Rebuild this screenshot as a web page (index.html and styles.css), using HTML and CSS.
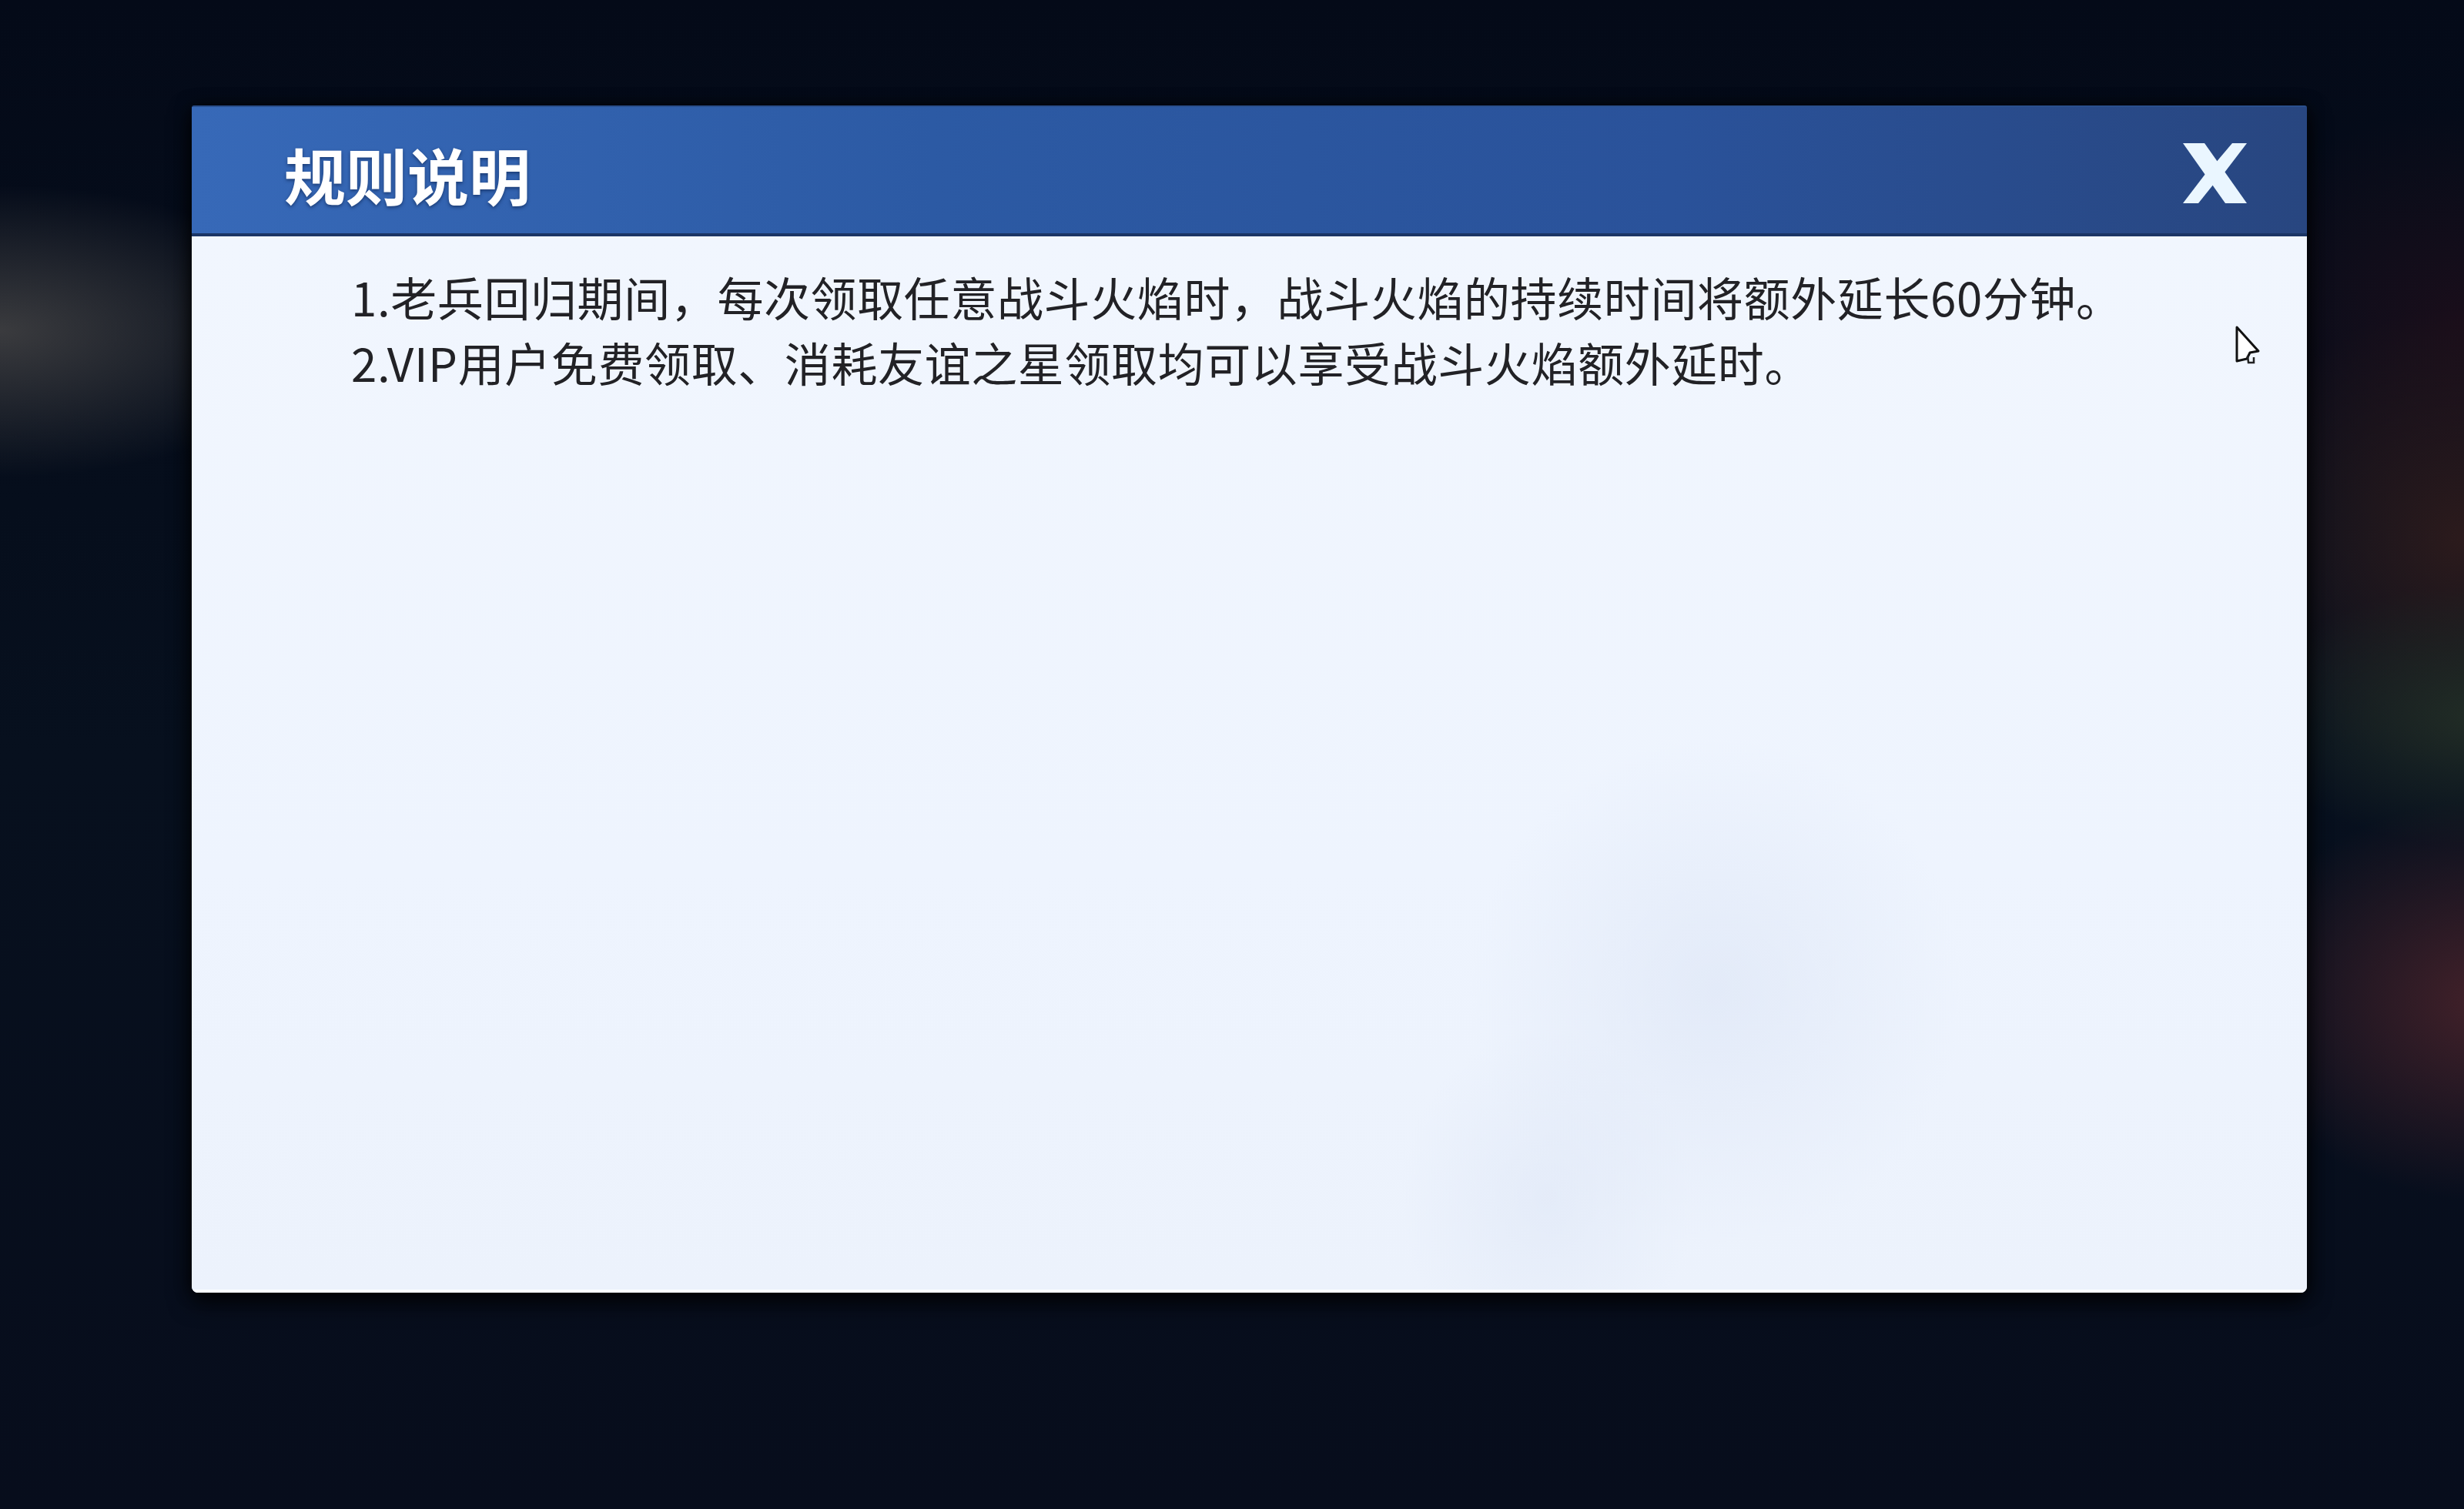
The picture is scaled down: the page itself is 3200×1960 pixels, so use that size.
FILE: index.html
```html
<!DOCTYPE html>
<html>
<head>
    <meta charset="utf-8">
    <link rel="stylesheet" href="styles.css">
</head>
<body>
    <div class="screen">
        <div class="dialog">
            <div class="dialog_head">
                <h1 class="dialog_title">规则说明</h1>
                <button class="btn_close">
                    <svg viewBox="0 0 84 78" width="84" height="78">
                        <polygon points="1,0 29,0 84,78 56,78" fill="#eaf6ff"/>
                        <polygon points="65,0 84,0 55,38 43,26" fill="#eaf6ff"/>
                        <polygon points="30,40 41,53 21,78 1,78" fill="#eaf6ff"/>
                    </svg>
                </button>
            </div>
            <div class="dialog_body">
                <p class="rule">1.老兵回归期间，每次领取任意战斗火焰时，战斗火焰的持续时间将额外延长60分钟。</p>
                <p class="rule">2.VIP用户免费领取、消耗友谊之星领取均可以享受战斗火焰额外延时。</p>
                <svg class="cursor" viewBox="0 0 40 54" width="40" height="54">
                    <polygon points="4,3 32,34 21,36 17,44 4,47" fill="#fff" stroke="#111" stroke-width="3" stroke-linejoin="round"/>
                    <path d="M18,40 L19,49 L26,49 L26,42" fill="none" stroke="#222" stroke-width="2.5"/>
                </svg>
            </div>
        </div>
    </div>
</body>
</html>
```

FILE: styles.css
```css
html, body { margin: 0; height: 100%; }
body {
    font-family: "Noto Sans CJK SC", "Noto Sans", sans-serif;
    background-color: #060c1a;
    background-image:
        radial-gradient(ellipse 420px 190px at 0px 430px, rgba(64, 64, 66, 0.9), rgba(64, 64, 66, 0)),
        radial-gradient(ellipse 330px 260px at 3230px 1300px, rgba(70, 34, 42, 0.95), rgba(70, 34, 42, 0)),
        radial-gradient(ellipse 300px 170px at 3220px 930px, rgba(34, 46, 38, 0.95), rgba(34, 46, 38, 0)),
        radial-gradient(ellipse 340px 300px at 3200px 700px, rgba(48, 28, 28, 0.9), rgba(48, 28, 28, 0)),
        radial-gradient(ellipse 330px 280px at 3200px 420px, rgba(28, 14, 26, 0.9), rgba(28, 14, 26, 0)),
        linear-gradient(180deg, #040a18 0%, #07101e 50%, #070d1c 100%);
}
.screen { width: 3200px; height: 1960px; padding: 137px 0 0 249px; box-sizing: border-box; }
.dialog {
    width: 2747px; height: 1542px;
    display: flex; flex-direction: column;
    border-radius: 3px 3px 8px 8px;
    overflow: hidden;
    box-shadow: 0 12px 30px rgba(0, 0, 0, 0.85), 0 0 20px rgba(0, 0, 0, 0.6);
}
.dialog_head {
    height: 170px; box-sizing: border-box;
    display: flex; align-items: center; justify-content: space-between;
    padding: 8px 78px 0 120px;
    background: linear-gradient(90deg, #3769b8 0%, #2c5aa4 35%, #2a529a 70%, #284680 100%);
    border-top: 2px solid #2a4f8c;
    border-bottom: 4px solid #1b3565;
}
.dialog_title {
    margin: 0; color: #fff;
    font-size: 80px; font-weight: 700; line-height: 1;
    text-shadow: 0 2px 4px rgba(10, 30, 70, 0.6);
}
.btn_close { background: none; border: none; padding: 0; cursor: pointer; display: block; }
.btn_close svg { display: block; }
.dialog_body {
    flex: 1; position: relative;
    padding: 35px 0 0 207px;
    background-color: #eff5fe;
    background-image:
        radial-gradient(ellipse 320px 330px at 1980px 980px, rgba(218, 227, 244, 0.55), rgba(218, 227, 244, 0)),
        radial-gradient(ellipse 190px 220px at 1760px 1250px, rgba(218, 227, 244, 0.45), rgba(218, 227, 244, 0)),
        linear-gradient(180deg, #f1f6fe 0%, #eef4fe 60%, #ecf2fc 100%);
    border-bottom: 4px solid #fbfdff;
}
.rule {
    margin: 0; color: #222226;
    font-size: 60px; line-height: 85px; white-space: nowrap;
    letter-spacing: 0.6px;
}
.cursor { position: absolute; left: 2652px; top: 115px; }
```
